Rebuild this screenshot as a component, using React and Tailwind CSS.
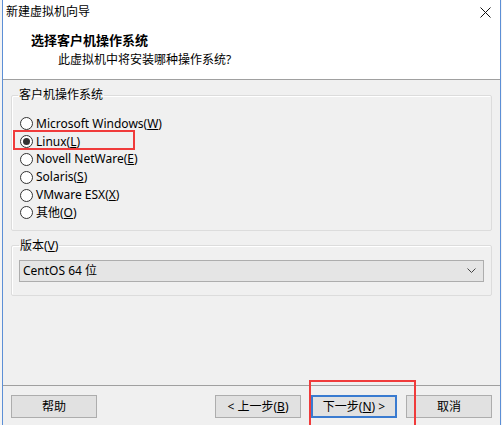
import React from 'react'

const FONT = { fontFamily: '"Segoe UI", "Noto Sans", "Noto Sans CJK SC", sans-serif' }

const Radio = ({ checked, children }) => (
  <div className="flex items-center h-[17.8px]">
    <span className="flex items-center justify-center w-[13px] h-[13px] rounded-full border border-[#333333] bg-white ml-[9px] mr-[3px]">
      {checked && <span className="w-[7px] h-[7px] rounded-full bg-[#333333]"></span>}
    </span>
    <span className="text-[12px] text-[#000000] leading-none">{children}</span>
  </div>
)

const Btn = ({ children, primary, className = '' }) => (
  <button
    className={
      'h-[23px] w-[86px] text-[12px] text-black bg-[#e1e1e1] flex items-center justify-center ' +
      (primary ? 'border-2 border-[#3a7bd0] ' : 'border border-[#adadad] ') +
      className
    }
  >
    {children}
  </button>
)

const u = (c) => <span className="underline underline-offset-1">{c}</span>

export default function App() {
  return (
    <div className="relative w-[502px] h-[425px] bg-[#f4f4f4] overflow-hidden flex pl-[2px] pr-[1px]" style={FONT}>
      <div className="flex-1 flex flex-col border-x border-[#5c8fd6] bg-[#f0f0f0]">
        {/* title + header */}
        <div className="bg-white h-[80px] border-b border-[#a0a0a0] flex flex-col">
          <div className="h-[24px] flex items-center justify-between pl-[3px] pr-[8px]">
            <span className="text-[12px] text-black">新建虚拟机向导</span>
            <svg width="11" height="11" viewBox="0 0 11 11" className="mr-[1px]">
              <path d="M0.5 0.5L10.5 10.5M10.5 0.5L0.5 10.5" stroke="#111" strokeWidth="1" />
            </svg>
          </div>
          <div className="pl-[28px] pt-[7px] text-[13px] font-bold text-black leading-[18px]">选择客户机操作系统</div>
          <div className="pl-[55px] pt-[3px] text-[12px] text-black leading-[16px]">此虚拟机中将安装哪种操作系统?</div>
        </div>

        {/* body */}
        <div className="flex-1 flex flex-col px-[8px] pt-[7px]">
          <fieldset className="border border-[#dcdcdc] rounded-[2px] px-[6px] pb-[8px] shadow-[inset_1px_1px_0_#ffffff]">
            <legend className="text-[12px] text-black px-[1px] leading-[16px]">客户机操作系统</legend>
            <div className="flex flex-col pt-[12px] -ml-[7px]">
              <Radio>Microsoft Windows({u('W')})</Radio>
              <Radio checked>Linux({u('L')})</Radio>
              <Radio>Novell NetWare({u('E')})</Radio>
              <Radio>Solaris({u('S')})</Radio>
              <Radio>VMware ESX({u('X')})</Radio>
              <Radio>其他({u('O')})</Radio>
            </div>
          </fieldset>

          <fieldset className="mt-[7px] border border-[#dcdcdc] rounded-[2px] px-[7px] pb-[13px] shadow-[inset_1px_1px_0_#ffffff]">
            <legend className="text-[12px] text-black px-[1px] leading-[16px]">版本({u('V')})</legend>
            <div className="mt-[6px] h-[22px] bg-[#e5e5e5] border border-[#adadad] flex items-center justify-between pl-[3px] pr-[7px]">
              <span className="text-[12px] text-black">CentOS 64 位</span>
              <svg width="9" height="5" viewBox="0 0 9 5">
                <path d="M0.5 0.5L4.5 4.5L8.5 0.5" fill="none" stroke="#444" strokeWidth="1" />
              </svg>
            </div>
          </fieldset>
        </div>

        {/* footer */}
        <div className="h-[40px] border-t border-[#a0a0a0] flex items-start pt-[9px] px-[8px]">
          <Btn>帮助</Btn>
          <div className="flex-1"></div>
          <Btn>&lt; 上一步({u('B')})</Btn>
          <Btn primary className="ml-[10px]">下一步({u('N')}) &gt;</Btn>
          <Btn className="ml-[9px]">取消</Btn>
        </div>
      </div>

      {/* annotation boxes */}
      <div className="absolute left-[13px] top-[130px] w-[122px] h-[20px] border-2 border-[#f03b3b]"></div>
      <div className="absolute left-[309px] top-[380px] w-[107px] h-[60px] border-2 border-[#f03b3b]"></div>
    </div>
  )
}
